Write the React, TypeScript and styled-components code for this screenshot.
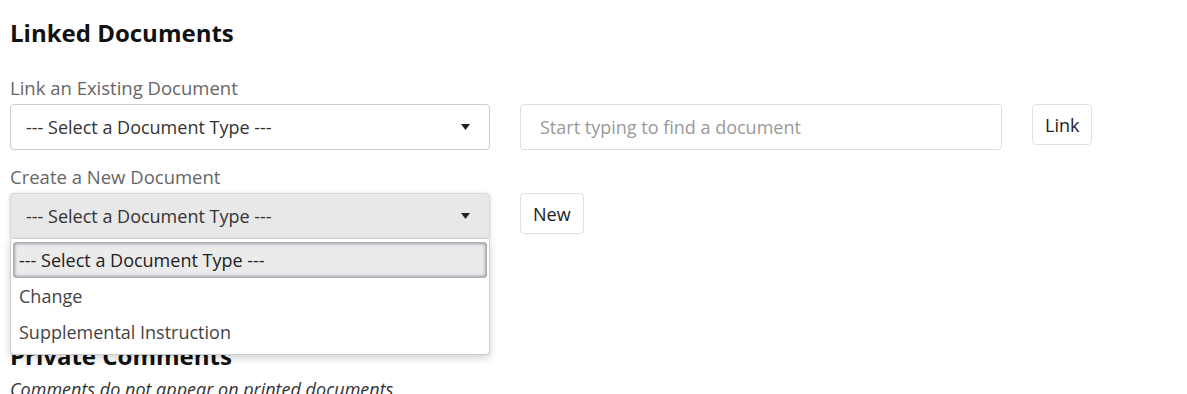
import styled, { createGlobalStyle } from "styled-components";

const Global = createGlobalStyle`
    body {
        margin: 0;
        background: #fff;
        font-family: "Open Sans", "Noto Sans", sans-serif;
        color: #333;
    }
`

const Page = styled.div`
    padding: 0 10px;
    width: 1167px;
    height: 394px;
    overflow: hidden;
`

const Heading = styled.h2`
    margin: ${p => p.$top}px 0 0;
    font-size: 24px;
    line-height: 32px;
    font-weight: 700;
    color: #111;
`

const Label = styled.div`
    margin-top: ${p => p.$top}px;
    font-size: 18.5px;
    line-height: 24px;
    color: #666;
`

const Row = styled.div`
    display: flex;
    align-items: flex-start;
    gap: 30px;
    margin-top: 4px;
`

const SelectWrap = styled.div`
    position: relative;
    width: 480px;
`

const SelectBox = styled.div`
    box-sizing: border-box;
    height: 46px;
    display: flex;
    align-items: center;
    justify-content: space-between;
    padding: 0 19px 0 15px;
    border: 1px solid ${p => p.$open ? "#d8d8d8" : "#ccc"};
    border-radius: 4px;
    background: ${p => p.$open ? "#e8e8e8" : "#fff"};
    box-shadow: ${p => p.$open ? "0 1px 4px rgba(0,0,0,0.18)" : "none"};
    font-size: 18px;
    color: #333;
`

const Arrow = styled.svg`
    width: 9px;
    height: 6px;
`

const TextInput = styled.input`
    box-sizing: border-box;
    width: 482px;
    height: 46px;
    padding: 0 19px;
    border: 1px solid #ddd;
    border-radius: 4px;
    font-family: inherit;
    font-size: 18px;
    color: #333;
    outline: none;

    &::placeholder {
        color: #999;
    }
`

const Button = styled.button`
    box-sizing: border-box;
    height: 41px;
    padding: 0 12px;
    border: 1px solid #e0e0e0;
    border-radius: 4px;
    background: #fff;
    font-family: inherit;
    font-size: 18px;
    color: #222;
`

const Menu = styled.ul`
    position: absolute;
    top: 100%;
    left: 0;
    right: 0;
    margin: 0;
    padding: 3px 2px 4px;
    list-style: none;
    background: #fff;
    border: 1px solid #ccc;
    border-top: none;
    border-radius: 0 0 4px 4px;
    box-shadow: 0 3px 8px rgba(0,0,0,0.18);
    z-index: 2;
`

const Option = styled.li`
    height: 36px;
    display: flex;
    align-items: center;
    padding: 0 6px;
    border-radius: 4px;
    font-size: 18px;
    color: ${p => p.$active ? "#222" : "#444"};
    background: ${p => p.$active ? "#ebebeb" : "transparent"};
    box-shadow: ${p => p.$active ? "inset 0 0 3px 2px #a4a3ad" : "none"};
`

const Note = styled.p`
    margin: 4px 0 0;
    font-size: 18px;
    line-height: 26px;
    font-style: italic;
    color: #333;
`

const PLACEHOLDER = "--- Select a Document Type ---"
const TYPES = [PLACEHOLDER, "Change", "Supplemental Instruction"]

function DocSelect({ open }: { open?: boolean }) {
    return (
        <SelectWrap>
            <SelectBox $open={open}>
                <span>{PLACEHOLDER}</span>
                <Arrow viewBox="0 0 9 6">
                    <path d="M0 0 H9 L4.5 6 Z" fill="#222" />
                </Arrow>
            </SelectBox>
            {open && (
                <Menu>
                    {TYPES.map((t, i) => (
                        <Option key={t} $active={i === 0}>{t}</Option>
                    ))}
                </Menu>
            )}
        </SelectWrap>
    )
}

export default function App() {
    return (
        <Page>
            <Global />
            <Heading $top={17}>Linked Documents</Heading>
            <Label $top={27}>Link an Existing Document</Label>
            <Row>
                <DocSelect />
                <TextInput placeholder="Start typing to find a document" />
                <Button>Link</Button>
            </Row>
            <Label $top={15}>Create a New Document</Label>
            <Row>
                <DocSelect open />
                <Button>New</Button>
            </Row>
            <Heading $top={101}>Private Comments</Heading>
            <Note>Comments do not appear on printed documents</Note>
        </Page>
    )
}
